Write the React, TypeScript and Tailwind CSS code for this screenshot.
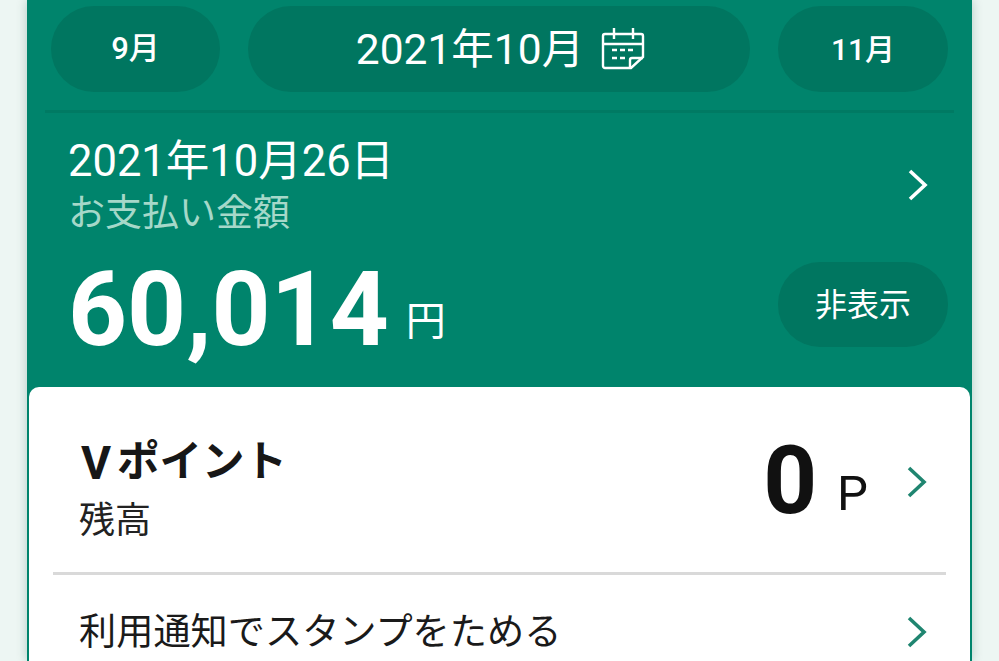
const Chevron = ({ className }: { className: string }) => (
  <svg viewBox="0 0 20 32" className={className} fill="none" stroke="currentColor" strokeWidth="3.6">
    <path d="M2 2 L17 16 L2 30" />
  </svg>
);

const Calendar = () => (
  <svg width="44" height="44" viewBox="0 0 44 44" fill="none" stroke="white" strokeWidth="2.4" className="ml-[17px] shrink-0">
    <path d="M13 1v11M32 1v11" />
    <path d="M29 41H4a2 2 0 0 1-2-2V9a2 2 0 0 1 2-2h36a2 2 0 0 1 2 2v21L30 41z" />
    <path d="M2 17h40" />
    <path d="M29 41v-8a2 2 0 0 1 2-2h11" />
    <path d="M11 23h5M19 23h5M27 23h5M11 31h5M19 31h5" />
  </svg>
);

export default function App() {
  return (
    <div
      className="h-[661px] w-[999px] overflow-hidden bg-[#edf6f3] px-[27px]"
      style={{ fontFamily: '"Roboto", "Noto Sans CJK JP", sans-serif' }}
    >
      <div className="h-full bg-[#00846c] shadow-[0_0_10px_rgba(0,80,60,0.25)]">
        <div className="flex gap-7 pl-6 pr-6 pt-1.5">
          <div className="flex h-[86px] w-[169px] items-center justify-center rounded-[43px] bg-[#007660] text-[31px] font-medium text-white">
            9月
          </div>
          <div className="flex h-[86px] flex-1 items-center justify-center rounded-[43px] bg-[#007660] pl-[3px] text-[42.5px] text-white">
            <span className="mt-0.5">2021年10月</span>
            <Calendar />
          </div>
          <div className="flex h-[86px] w-[170px] items-center justify-center rounded-[43px] bg-[#007660] text-[30px] font-medium text-white">
            11月
          </div>
        </div>
        <div className="mx-[18px] mt-[18px] h-[3px] bg-[#007a63]" />
        <div className="flex items-center justify-between pl-[41px] pr-11 pt-[22px]">
          <div>
            <div className="text-[43.5px] leading-[53px] text-white">2021年10月26日</div>
            <div className="text-[37px] leading-[52px] text-[#a5d8c9]">お支払い金額</div>
          </div>
          <Chevron className="mb-1.5 h-8 w-5 text-white" />
        </div>
        <div className="flex items-center justify-between pl-[41px] pr-6 pt-[22px]">
          <div className="flex items-end">
            <span className="mt-2.5 text-[103px] font-bold leading-[75px] text-white">60,014</span>
            <span className="ml-[17px] text-[40px] leading-[50px] text-white">円</span>
          </div>
          <div className="flex h-[85px] w-[170px] items-center justify-center rounded-[42px] bg-[#007660] text-[32px] text-white">
            非表示
          </div>
        </div>
        <div className="mx-0.5 mt-10 h-[300px] rounded-t-[10px] bg-white px-6">
          <div className="flex h-[188px] items-center justify-between border-b-[3px] border-[#d9d9d9] pt-6">
            <div className="pl-[26px]">
              <div className="flex h-[58px] items-center pl-0.5 text-[42.5px] font-bold text-[#171717]">
                <span className="text-[46px] leading-none">V</span>
                <span className="ml-[6px] leading-none">ポイント</span>
              </div>
              <div className="text-[36px] leading-[58px] text-[#222222]">残高</div>
            </div>
            <div className="mb-[22px] flex items-end">
              <span className="text-[94px] font-bold leading-none text-[#111111]">0</span>
              <span className="mb-2.5 ml-5 text-[49px] leading-none text-[#111111]">P</span>
              <Chevron className="mb-[30px] ml-[39px] mr-[19px] h-8 w-5 text-[#1f8570]" />
            </div>
          </div>
          <div className="flex items-center justify-between pt-8">
            <div className="pl-[26px] text-[37.2px] leading-[50px] text-[#1a1a1a]">利用通知でスタンプをためる</div>
            <Chevron className="mr-[19px] h-8 w-5 text-[#1f8570]" />
          </div>
        </div>
      </div>
    </div>
  );
}
